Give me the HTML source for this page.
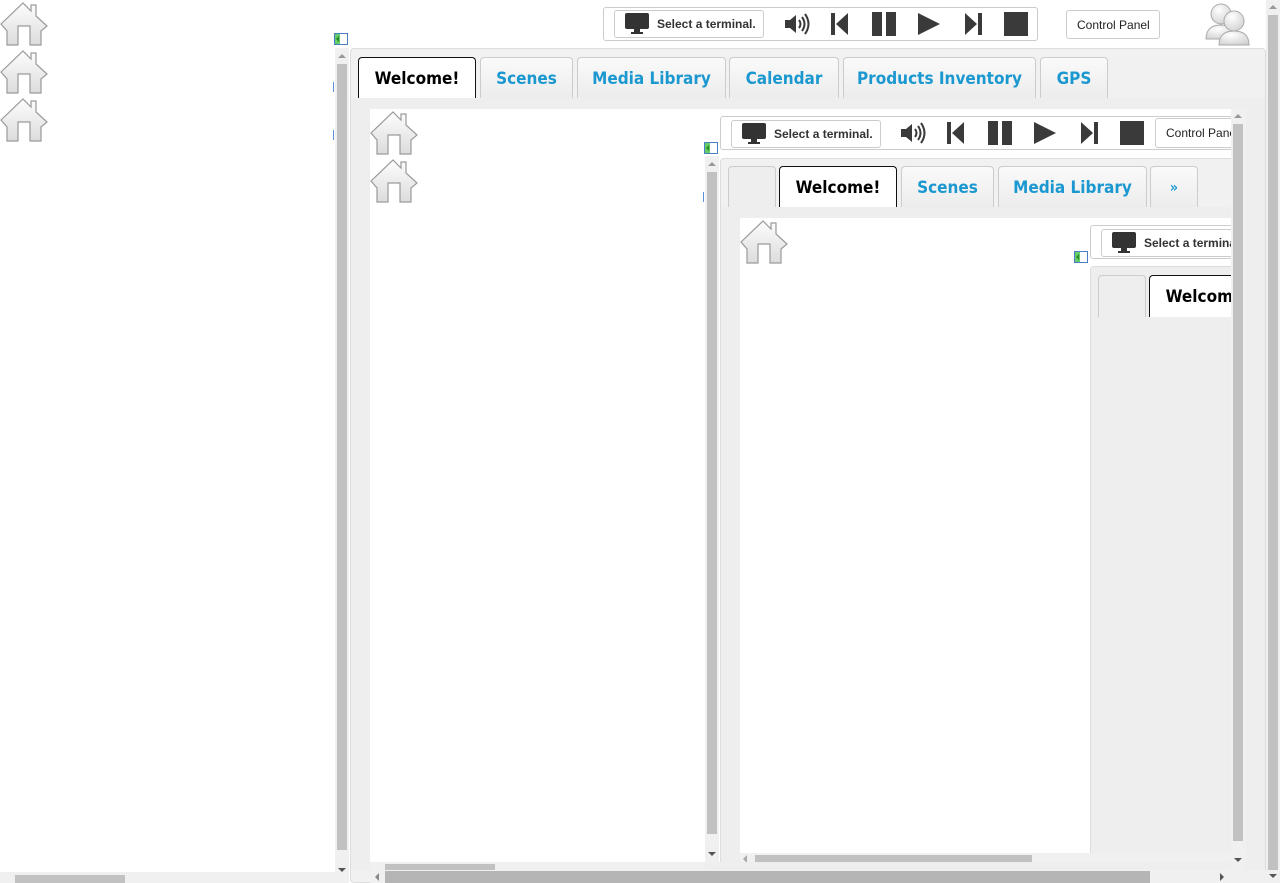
<!DOCTYPE html>
<html><head><meta charset="utf-8"><style>
*{box-sizing:border-box;margin:0;padding:0}
body{width:1280px;height:883px;overflow:hidden;background:#fff;position:relative;font-family:"Liberation Sans",sans-serif}
.a{position:absolute}
.tb{position:absolute;border:1px solid #ccc;border-radius:3px;background:#fff}
.btn{position:absolute;border:1px solid #ccc;border-radius:3px;background:#fff;font-size:12px;font-weight:bold;color:#333;display:flex;align-items:center;white-space:nowrap;overflow:hidden}
.btn svg{margin:0 8px 0 10px;flex:none}
.cp{position:absolute;border:1px solid #ccc;border-radius:3px;background:#fff;font-size:12px;color:#222;display:flex;align-items:center;padding-left:10px;white-space:nowrap;overflow:hidden}
.tab{position:absolute;height:42px;border:1px solid #ccc;border-bottom:none;border-radius:4px 4px 0 0;background:linear-gradient(#fafafa,#ececec);color:#1b98d0;font-family:"DejaVu Sans Condensed","DejaVu Sans",sans-serif;font-stretch:condensed;font-weight:bold;font-size:17px;display:flex;align-items:center;justify-content:center;white-space:nowrap;overflow:hidden}
.tab.on{background:#fff;border-color:#111;color:#000}
.tab.bl{background:#eee}
.sv{position:absolute;background:#f0f0f0}
.th{position:absolute;background:#c1c1c1}
.clip{position:absolute;overflow:hidden}
.ic{position:absolute}
</style></head><body>
<svg width="0" height="0" style="position:absolute">
<defs>
<linearGradient id="hg" x1="0" y1="0" x2="0" y2="1"><stop offset="0" stop-color="#fdfdfd"/><stop offset="1" stop-color="#dcdcdc"/></linearGradient>
<symbol id="house" viewBox="0 0 48 44"><path d="M1 22 L23 1 L31 9 L31 3 L36 3 L36 14 L47 24 L41 29 L41 43 L30 43 L30 24 L18 24 L18 43 L7 43 L7 29 Z" fill="url(#hg)" stroke="#9a9a9a" stroke-width="1.2"/></symbol>
<symbol id="mon" viewBox="0 0 24 22"><rect x="0" y="0" width="24" height="16" rx="2" fill="#333"/><rect x="2" y="2" width="20" height="12" fill="#333"/><rect x="9" y="16" width="6" height="3" fill="#333"/><rect x="6" y="19" width="12" height="2" fill="#333"/></symbol>
<symbol id="spk" viewBox="0 0 26 24"><path d="M1 8 H6 L12 3 V21 L6 16 H1 Z" fill="#3a3a3a"/><path d="M15 8 Q18 12 15 16 M18 5 Q23 12 18 19 M21 2 Q28 12 21 22" stroke="#3a3a3a" stroke-width="2" fill="none"/></symbol>
<symbol id="prev" viewBox="0 0 24 24"><rect x="2" y="1" width="4" height="22" fill="#3a3a3a"/><path d="M19 1 V23 L7 12 Z" fill="#3a3a3a"/></symbol>
<symbol id="pause" viewBox="0 0 24 24"><rect x="0" y="0" width="10" height="24" fill="#3a3a3a"/><rect x="14" y="0" width="10" height="24" fill="#3a3a3a"/></symbol>
<symbol id="play" viewBox="0 0 24 24"><path d="M1 1 L23 12 L1 23 Z" fill="#3a3a3a"/></symbol>
<symbol id="next" viewBox="0 0 24 24"><path d="M5 1 V23 L17 12 Z" fill="#3a3a3a"/><rect x="18" y="1" width="4" height="22" fill="#3a3a3a"/></symbol>
<symbol id="stop" viewBox="0 0 24 24"><rect x="0" y="0" width="24" height="24" fill="#3a3a3a"/></symbol>
<symbol id="mini" viewBox="0 0 14 12"><rect x="0.5" y="0.5" width="13" height="11" fill="#fff" stroke="#4a7fc8"/><rect x="1" y="1" width="5" height="10" fill="#6c6"/><path d="M5 3 L2 6 L5 9 Z" fill="#2a8a2a"/></symbol>
</defs></svg>

<svg class="ic" style="left:0;top:2px" width="48" height="44"><use href="#house"/></svg>
<svg class="ic" style="left:0;top:50px" width="48" height="44"><use href="#house"/></svg>
<svg class="ic" style="left:0;top:98px" width="48" height="44"><use href="#house"/></svg>

<div class="sv" style="left:335px;top:48px;width:14px;height:835px"></div>
<div class="th" style="left:337px;top:64px;width:10px;height:786px"></div>
<div class="a" style="left:338px;top:54px;border:4px solid transparent;border-bottom:4px solid #999;border-top:none;width:0;height:0"></div>
<div class="a" style="left:338px;top:868px;border:4px solid transparent;border-top:4px solid #555;border-bottom:none;width:0;height:0"></div>
<svg class="ic" style="left:334px;top:33px" width="14" height="12"><use href="#mini"/></svg>
<div class="a" style="left:333px;top:82px;width:1px;height:10px;background:#5b8fd6"></div>
<div class="a" style="left:333px;top:130px;width:1px;height:10px;background:#5b8fd6"></div>
<div class="sv" style="left:0;top:872px;width:335px;height:11px"></div>
<div class="th" style="left:15px;top:875px;width:110px;height:8px"></div>

<div class="tb" style="left:603px;top:7px;width:435px;height:34px"></div>
<div class="btn" style="left:614px;top:10px;width:150px;height:28px"><svg width="24" height="22"><use href="#mon"/></svg>Select a terminal.</div>
<svg class="ic" style="left:784px;top:12px" width="26" height="24"><use href="#spk"/></svg>
<svg class="ic" style="left:829px;top:12px" width="24" height="24"><use href="#prev"/></svg>
<svg class="ic" style="left:872px;top:12px" width="24" height="24"><use href="#pause"/></svg>
<svg class="ic" style="left:917px;top:12px" width="24" height="24"><use href="#play"/></svg>
<svg class="ic" style="left:960px;top:12px" width="24" height="24"><use href="#next"/></svg>
<svg class="ic" style="left:1004px;top:12px" width="24" height="24"><use href="#stop"/></svg>
<div class="cp" style="left:1066px;top:10px;width:94px;height:29px">Control Panel</div>
<svg class="ic" style="left:1204px;top:1px" width="48" height="46" viewBox="0 0 48 46">
<defs><radialGradient id="ug" cx="0.4" cy="0.3" r="0.8"><stop offset="0" stop-color="#fff"/><stop offset="1" stop-color="#cfcfcf"/></radialGradient></defs>
<circle cx="17" cy="13" r="10" fill="url(#ug)" stroke="#aaa"/><path d="M2 38 Q2 24 17 24 Q32 24 32 38 Z" fill="url(#ug)" stroke="#aaa"/>
<circle cx="30" cy="20" r="10" fill="url(#ug)" stroke="#aaa"/><path d="M15 44 Q15 30 30 30 Q45 30 45 44 Z" fill="url(#ug)" stroke="#aaa"/></svg>

<div class="sv" style="left:1266px;top:0;width:14px;height:883px"></div>
<div class="th" style="left:1268px;top:15px;width:10px;height:855px"></div>
<div class="a" style="left:1269px;top:5px;border:4px solid transparent;border-bottom:4px solid #999;border-top:none;width:0;height:0"></div>
<div class="a" style="left:1269px;top:874px;border:4px solid transparent;border-top:4px solid #555;border-bottom:none;width:0;height:0"></div>

<div class="a" style="left:350px;top:48px;width:916px;height:835px;background:#f1f1f1;border:1px solid #ddd;border-radius:4px"></div>
<div class="tab on" style="left:358px;top:57px;width:118px;">Welcome!</div>
<div class="tab" style="left:480px;top:57px;width:93px;">Scenes</div>
<div class="tab" style="left:577px;top:57px;width:149px;">Media Library</div>
<div class="tab" style="left:729px;top:57px;width:110px;">Calendar</div>
<div class="tab" style="left:843px;top:57px;width:193px;">Products Inventory</div>
<div class="tab" style="left:1040px;top:57px;width:68px;">GPS</div>
<div class="a" style="left:351px;top:98px;width:914px;height:772px;background:#eeeeee"></div>
<div class="a" style="left:370px;top:109px;width:862px;height:753px;background:#fff"></div>

<svg class="ic" style="left:370px;top:111px" width="48" height="44"><use href="#house"/></svg>
<svg class="ic" style="left:370px;top:159px" width="48" height="44"><use href="#house"/></svg>
<svg class="ic" style="left:704px;top:142px" width="14" height="12"><use href="#mini"/></svg>
<div class="a" style="left:703px;top:192px;width:1px;height:10px;background:#5b8fd6"></div>
<div class="sv" style="left:705px;top:156px;width:14px;height:708px"></div>
<div class="th" style="left:707px;top:172px;width:10px;height:662px"></div>
<div class="a" style="left:708px;top:162px;border:4px solid transparent;border-bottom:4px solid #999;border-top:none;width:0;height:0"></div>
<div class="a" style="left:708px;top:852px;border:4px solid transparent;border-top:4px solid #555;border-bottom:none;width:0;height:0"></div>
<div class="sv" style="left:370px;top:862px;width:335px;height:8px"></div>
<div class="th" style="left:385px;top:864px;width:110px;height:6px"></div>

<div class="clip" style="left:719px;top:109px;width:512px;height:753px">
  <div class="tb" style="left:1px;top:7px;width:530px;height:34px"></div>
  <div class="btn" style="left:12px;top:11px;width:150px;height:28px"><svg width="24" height="22"><use href="#mon"/></svg>Select a terminal.</div>
  <svg class="ic" style="left:181px;top:12px" width="26" height="24"><use href="#spk"/></svg>
  <svg class="ic" style="left:226px;top:12px" width="24" height="24"><use href="#prev"/></svg>
  <svg class="ic" style="left:269px;top:12px" width="24" height="24"><use href="#pause"/></svg>
  <svg class="ic" style="left:314px;top:12px" width="24" height="24"><use href="#play"/></svg>
  <svg class="ic" style="left:357px;top:12px" width="24" height="24"><use href="#next"/></svg>
  <svg class="ic" style="left:401px;top:12px" width="24" height="24"><use href="#stop"/></svg>
  <div class="cp" style="left:436px;top:9px;width:94px;height:30px">Control Panel</div>
  <div class="a" style="left:1px;top:49px;width:520px;height:710px;background:#f1f1f1;border:1px solid #ddd;border-radius:4px"></div>
  <div class="tab bl" style="left:9px;top:57px;width:48px;"></div>
  <div class="tab on" style="left:60px;top:57px;width:118px;">Welcome!</div>
  <div class="tab" style="left:182px;top:57px;width:93px;">Scenes</div>
  <div class="tab" style="left:279px;top:57px;width:149px;">Media Library</div>
  <div class="tab" style="left:431px;top:57px;width:48px;font-size:14px">»</div>
  <div class="a" style="left:2px;top:98px;width:520px;height:660px;background:#eeeeee"></div>
  <div class="a" style="left:21px;top:109px;width:492px;height:635px;background:#fff"></div>
  <svg class="ic" style="left:21px;top:111px" width="48" height="44"><use href="#house"/></svg>
  <svg class="ic" style="left:355px;top:142px" width="14" height="12"><use href="#mini"/></svg>
  <div class="a" style="left:371px;top:116px;width:200px;height:34px;border:1px solid #ccc;border-radius:3px;background:#fff"></div>
  <div class="btn" style="left:382px;top:120px;width:150px;height:28px"><svg width="24" height="22"><use href="#mon"/></svg>Select a terminal.</div>
  <div class="a" style="left:371px;top:157px;width:200px;height:590px;background:#eeeeee;border:1px solid #ddd;border-radius:4px"></div>
  <div class="tab bl" style="left:379px;top:166px;width:48px;"></div>
  <div class="tab on" style="left:430px;top:166px;width:118px;">Welcome!</div>
  <div class="sv" style="left:21px;top:744px;width:492px;height:12px"></div>
  <div class="th" style="left:36px;top:746px;width:277px;height:10px"></div>
  <div class="a" style="left:24px;top:746px;border:4px solid transparent;border-right:4px solid #aaa;border-left:none;width:0;height:0"></div>
</div>

<div class="sv" style="left:1231px;top:109px;width:15px;height:760px"></div>
<div class="th" style="left:1233px;top:124px;width:10px;height:717px"></div>
<div class="a" style="left:1234px;top:114px;border:4px solid transparent;border-bottom:4px solid #999;border-top:none;width:0;height:0"></div>
<div class="a" style="left:1234px;top:858px;border:4px solid transparent;border-top:4px solid #555;border-bottom:none;width:0;height:0"></div>

<div class="sv" style="left:370px;top:870px;width:896px;height:13px"></div>
<div class="th" style="left:385px;top:871px;width:765px;height:12px;background:#b5b5b5"></div>
<div class="a" style="left:375px;top:873px;border:4px solid transparent;border-right:4px solid #888;border-left:none;width:0;height:0"></div>
<div class="a" style="left:1220px;top:873px;border:4px solid transparent;border-left:4px solid #555;border-right:none;width:0;height:0"></div>
</body></html>
